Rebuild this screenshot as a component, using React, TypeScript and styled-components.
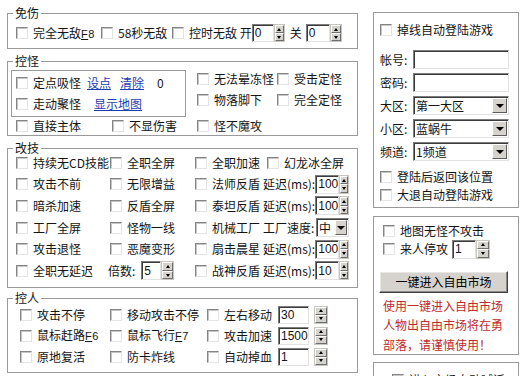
import React from "react";
import styled, { createGlobalStyle } from "styled-components";

const GlobalStyle = createGlobalStyle`
  html, body { margin: 0; padding: 0; background: #fff; }
  body {
    font-family: "Noto Sans CJK SC", "Noto Sans", sans-serif;
    font-size: 12px;
    color: #141414;
  }
  * { box-sizing: border-box; }
`;

const Page = styled.div`
  display: flex;
  align-items: flex-start;
  gap: 15px;
  width: 521px;
  height: 376px;
  overflow: hidden;
  padding-left: 7px;
`;

const LeftCol = styled.div`
  display: flex;
  flex-direction: column;
  width: 351px;
  padding-top: 6px;
`;

const RightCol = styled.div`
  display: flex;
  flex-direction: column;
  width: 146px;
  padding-top: 12px;
`;

const Group = styled.fieldset<{ $h: number; $mt?: number }>`
  margin: ${(p) => p.$mt ?? 0}px 0 0 0;
  height: ${(p) => p.$h}px;
  padding: 0;
  border: 1px solid #9a9a9a;
  box-shadow: inset 1px 1px 0 #fff, 1px 1px 0 #fff;
  min-width: 0;
`;

const Legend = styled.legend`
  margin-left: 5px;
  padding: 0 2px;
  line-height: 14px;
  font-size: 12px;
`;

const Body = styled.div<{ $pl?: number; $pr?: number; $pt?: number }>`
  display: flex;
  flex-direction: column;
  padding: ${(p) => p.$pt ?? 0}px ${(p) => p.$pr ?? 0}px 0 ${(p) => p.$pl ?? 0}px;
`;

const Row = styled.div<{ $h?: number; $mt?: number }>`
  display: flex;
  align-items: center;
  height: ${(p) => p.$h ?? 21}px;
  margin-top: ${(p) => p.$mt ?? 0}px;
  white-space: nowrap;
`;

const Check = styled.label<{ $w?: number }>`
  display: inline-flex;
  align-items: center;
  gap: 5px;
  width: ${(p) => (p.$w ? `${p.$w}px` : "auto")};
  flex-shrink: 0;
  white-space: nowrap;
  line-height: 16px;
`;

const Box = styled.span`
  width: 12px;
  height: 12px;
  flex-shrink: 0;
  background: #fff;
  border: 1px solid;
  border-color: #858585 #e4e4e4 #e4e4e4 #858585;
  box-shadow: inset 1px 1px 0 #c6c6c6;
`;

const Cell = styled.div<{ $w?: number }>`
  display: flex;
  align-items: center;
  width: ${(p) => (p.$w ? `${p.$w}px` : "auto")};
  flex: ${(p) => (p.$w ? "0 0 auto" : "1 1 auto")};
  white-space: nowrap;
`;

const Text = styled.span<{ $ml?: number; $mr?: number }>`
  margin-left: ${(p) => p.$ml ?? 0}px;
  margin-right: ${(p) => p.$mr ?? 0}px;
  line-height: 16px;
`;

const Push = styled.span`
  margin-left: auto;
`;

const Link = styled.span<{ $ml: number }>`
  margin-left: ${(p) => p.$ml}px;
  color: #1f3cb0;
  text-decoration: underline;
  line-height: 16px;
`;

const Hot = styled.span`
  font-family: "Liberation Sans", sans-serif;
  font-size: 11px;
  letter-spacing: 0.5px;
  u { text-decoration: underline; }
`;

const SpinWrap = styled.div<{ $h: number; $gap: number; $ml: number }>`
  display: flex;
  height: ${(p) => p.$h}px;
  gap: ${(p) => p.$gap}px;
  margin-left: ${(p) => p.$ml}px;
  flex-shrink: 0;
`;

const Field = styled.div<{ $w?: number }>`
  width: ${(p) => (p.$w ? `${p.$w}px` : "auto")};
  flex: ${(p) => (p.$w ? "0 0 auto" : "1 1 auto")};
  height: 100%;
  background: #fff;
  border: 1px solid;
  border-color: #7c7c7c #e2e2e2 #e2e2e2 #7c7c7c;
  box-shadow: inset 1px 1px 0 #3c3c3c;
  padding-left: 2px;
  display: flex;
  align-items: center;
  line-height: 14px;
  font-family: "Liberation Sans", "Noto Sans CJK SC", sans-serif;
  font-size: 12px;
  overflow: hidden;
  white-space: nowrap;
`;

const SpinBtns = styled.div<{ $w: number }>`
  display: flex;
  flex-direction: column;
  width: ${(p) => p.$w}px;
  height: 100%;
  border: 1px solid #c9c6c0;
`;

const SpinBtn = styled.div`
  flex: 1;
  display: flex;
  align-items: center;
  justify-content: center;
  background: #d6d3ce;
  border: 1px solid;
  border-color: #fff #6e6e6e #6e6e6e #fff;
`;

const Tri = styled.span<{ $down?: boolean }>`
  width: 0;
  height: 0;
  border-left: 2.5px solid transparent;
  border-right: 2.5px solid transparent;
  ${(p) =>
    p.$down ? "border-top: 3px solid #000;" : "border-bottom: 3px solid #000;"}
`;

const DropBtn = styled.span<{ $w: number }>`
  width: ${(p) => p.$w}px;
  height: calc(100% - 2px);
  margin: 1px 1px 1px auto;
  flex-shrink: 0;
  background: #d6d3ce;
  border: 1px solid;
  border-color: #fff #5e5e5e #5e5e5e #fff;
  display: flex;
  align-items: center;
  justify-content: center;
`;

const ComboField = styled(Field)`
  padding-right: 0;
  font-family: "Noto Sans CJK SC", sans-serif;
`;

const DropTri = styled.span`
  width: 0;
  height: 0;
  border-left: 4px solid transparent;
  border-right: 4px solid transparent;
  border-top: 4px solid #000;
`;

type SpinProps = { value: string; w: number; bw?: number; h?: number; gap?: number; ml?: number };
const Spin = ({ value, w, bw = 11, h = 18, gap = 0, ml = 0 }: SpinProps) => (
  <SpinWrap $h={h} $gap={gap} $ml={ml}>
    <Field $w={w}>{value}</Field>
    <SpinBtns $w={bw}>
      <SpinBtn>
        <Tri />
      </SpinBtn>
      <SpinBtn>
        <Tri $down />
      </SpinBtn>
    </SpinBtns>
  </SpinWrap>
);

type ComboProps = { value: string; w?: number; h?: number; bw?: number; ml?: number };
const Combo = ({ value, w, h = 19, bw = 15, ml = 0 }: ComboProps) => (
  <SpinWrap $h={h} $gap={0} $ml={ml} style={w ? undefined : { flex: 1 }}>
    <ComboField $w={w}>
      <span>{value}</span>
      <DropBtn $w={bw}>
        <DropTri />
      </DropBtn>
    </ComboField>
  </SpinWrap>
);

const CB = ({ children, w }: { children: React.ReactNode; w?: number }) => (
  <Check $w={w}>
    <Box />
    <span>{children}</span>
  </Check>
);

const InnerBox = styled.div`
  width: 175px;
  height: 47px;
  border: 1px solid #9a9a9a;
  box-shadow: inset 1px 1px 0 #fff, 1px 1px 0 #fff;
  padding: 0 0 0 4px;
  display: flex;
  flex-direction: column;
`;

const TopPart = styled.div`
  display: flex;
  align-items: flex-start;
  margin-top: 2px;
`;

const SideGrid = styled.div`
  display: grid;
  grid-template-columns: 80px auto;
  grid-auto-rows: 21px;
  align-items: center;
  margin: -2px 0 0 11px;
`;

const Panel = styled.div<{ $h: number; $mt?: number; $pl?: number }>`
  height: ${(p) => p.$h}px;
  margin-top: ${(p) => p.$mt ?? 0}px;
  border: 1px solid #9a9a9a;
  box-shadow: inset 1px 1px 0 #fff, 1px 1px 0 #fff;
  padding: 0 9px 0 ${(p) => p.$pl ?? 6}px;
  display: flex;
  flex-direction: column;
  overflow: hidden;
`;

const FormRow = styled.div<{ $mt?: number }>`
  display: flex;
  align-items: center;
  height: 19px;
  margin-top: ${(p) => p.$mt ?? 4}px;
`;

const FormLabel = styled.span`
  width: 33px;
  flex-shrink: 0;
  line-height: 16px;
`;

const BigButton = styled.div`
  margin: 12px 0 0 -4px;
  width: 129px;
  height: 22px;
  flex-shrink: 0;
  display: flex;
  align-items: center;
  justify-content: center;
  background: #d6d3ce;
  border: 1px solid;
  border-color: #fff #404040 #404040 #fff;
  box-shadow: inset -1px -1px 0 #8a8a8a, inset 1px 1px 0 #e8e6e2;
  color: #000;
  line-height: 16px;
`;

const Warn = styled.div`
  margin-top: 3px;
  color: #c02a2a;
  line-height: 19.5px;
  white-space: nowrap;
`;

const SkillRow = styled(Row)`
  height: 21.6px;
`;

export default function App() {
  return (
    <>
      <GlobalStyle />
      <Page>
        <LeftCol>
          <Group $h={43}>
            <Legend>免伤</Legend>
            <Body $pl={8}>
              <Row $h={20} $mt={3}>
                <CB w={85}>
                  完全无敌
                  <Hot>
                    <u>F</u>8
                  </Hot>
                </CB>
                <CB w={71}>58秒无敌</CB>
                <CB>控时无敌 开</CB>
                <Spin value="0" w={22} bw={11} h={18} />
                <Text $ml={5} $mr={4}>
                  关
                </Text>
                <Spin value="0" w={24} bw={12} h={18} />
              </Row>
            </Body>
          </Group>

          <Group $h={82} $mt={5}>
            <Legend>控怪</Legend>
            <Body $pl={3}>
              <TopPart>
                <InnerBox>
                  <Row $h={21} $mt={1}>
                    <CB>定点吸怪</CB>
                    <Link $ml={6}>设点</Link>
                    <Link $ml={9}>清除</Link>
                    <Text $ml={13}>0</Text>
                  </Row>
                  <Row $h={21}>
                    <CB>走动聚怪</CB>
                    <Link $ml={13}>显示地图</Link>
                  </Row>
                </InnerBox>
                <SideGrid>
                  <CB>无法晕冻怪</CB>
                  <CB>受击定怪</CB>
                  <CB>物落脚下</CB>
                  <CB>完全定怪</CB>
                </SideGrid>
              </TopPart>
              <Row $h={18} $mt={0}>
                <Cell $w={5} />
                <CB w={96}>直接主体</CB>
                <CB w={85}>不显伤害</CB>
                <CB>怪不魔攻</CB>
              </Row>
            </Body>
          </Group>

          <Group $h={147} $mt={5}>
            <Legend>改技</Legend>
            <Body $pl={8} $pr={8}>
              <SkillRow $mt={-3}>
                <CB w={94}>持续无CD技能</CB>
                <CB w={85}>全职全屏</CB>
                <CB w={72}>全职加速</CB>
                <CB>幻龙冰全屏</CB>
              </SkillRow>
              <SkillRow>
                <CB w={94}>攻击不前</CB>
                <CB w={85}>无限增益</CB>
                <Cell>
                  <CB>法师反盾</CB>
                  <Text $ml={3}>延迟(ms):</Text>
                  <Push />
                  <Spin value="100" w={24} bw={10} h={19} />
                </Cell>
              </SkillRow>
              <SkillRow>
                <CB w={94}>暗杀加速</CB>
                <CB w={85}>反盾全屏</CB>
                <Cell>
                  <CB>泰坦反盾</CB>
                  <Text $ml={3}>延迟(ms):</Text>
                  <Push />
                  <Spin value="100" w={24} bw={10} h={19} />
                </Cell>
              </SkillRow>
              <SkillRow>
                <CB w={94}>工厂全屏</CB>
                <CB w={85}>怪物一线</CB>
                <Cell>
                  <CB>机械工厂</CB>
                  <Text $ml={3}>工厂速度:</Text>
                  <Push />
                  <Combo value="中" w={33} h={19} bw={12} />
                </Cell>
              </SkillRow>
              <SkillRow>
                <CB w={94}>攻击退怪</CB>
                <CB w={85}>恶魔变形</CB>
                <Cell>
                  <CB>扇击晨星</CB>
                  <Text $ml={3}>延迟(ms):</Text>
                  <Push />
                  <Spin value="100" w={24} bw={10} h={19} />
                </Cell>
              </SkillRow>
              <SkillRow>
                <CB w={92}>全职无延迟</CB>
                <Cell $w={87}>
                  <Text $mr={6}>倍数:</Text>
                  <Spin value="5" w={20} bw={13} h={19} />
                </Cell>
                <Cell>
                  <CB>战神反盾</CB>
                  <Text $ml={3}>延迟(ms):</Text>
                  <Push />
                  <Spin value="10" w={24} bw={10} h={19} />
                </Cell>
              </SkillRow>
            </Body>
          </Group>

          <Group $h={82} $mt={3}>
            <Legend>控人</Legend>
            <Body $pl={12}>
              <Row $h={21} $mt={-1}>
                <CB w={90}>攻击不停</CB>
                <CB w={97}>移动攻击不停</CB>
                <CB w={71}>左右移动</CB>
                <Spin value="30" w={31} bw={14} h={18} gap={5} />
              </Row>
              <Row $h={21}>
                <CB w={90}>
                  鼠标赶路
                  <Hot>
                    <u>F</u>6
                  </Hot>
                </CB>
                <CB w={97}>
                  鼠标飞行
                  <Hot>
                    <u>F</u>7
                  </Hot>
                </CB>
                <CB w={71}>攻击加速</CB>
                <Spin value="1500" w={31} bw={14} h={18} gap={5} />
              </Row>
              <Row $h={21}>
                <CB w={90}>原地复活</CB>
                <CB w={97}>防卡炸线</CB>
                <CB w={71}>自动掉血</CB>
                <Spin value="1" w={31} bw={14} h={18} gap={5} />
              </Row>
            </Body>
          </Group>
        </LeftCol>

        <RightCol>
          <Panel $h={196}>
            <Row $h={18} $mt={8}>
              <CB>掉线自动登陆游戏</CB>
            </Row>
            <FormRow $mt={11}>
              <FormLabel>帐号:</FormLabel>
              <Field />
            </FormRow>
            <FormRow>
              <FormLabel>密码:</FormLabel>
              <Field />
            </FormRow>
            <FormRow>
              <FormLabel>大区:</FormLabel>
              <Combo value="第一大区" />
            </FormRow>
            <FormRow>
              <FormLabel>小区:</FormLabel>
              <Combo value="蓝蜗牛" />
            </FormRow>
            <FormRow>
              <FormLabel>频道:</FormLabel>
              <Combo value="1频道" />
            </FormRow>
            <Row $h={18} $mt={7}>
              <CB>登陆后返回该位置</CB>
            </Row>
            <Row $h={18}>
              <CB>大退自动登陆游戏</CB>
            </Row>
          </Panel>

          <Panel $h={139} $mt={8} $pl={9}>
            <Row $h={18} $mt={6}>
              <CB>地图无怪不攻击</CB>
            </Row>
            <Row $h={20}>
              <CB>来人停攻</CB>
              <Spin value="1" w={24} bw={14} h={19} ml={4} />
            </Row>
            <BigButton>一键进入自由市场</BigButton>
            <Warn>
              使用一键进入自由市场
              <br />
              人物出自由市场将在勇
              <br />
              部落，请谨慎使用！
            </Warn>
          </Panel>

          <Panel $h={40} $mt={7} $pl={18}>
            <Row $h={18} $mt={8}>
              <CB>进入市场自动喊话</CB>
            </Row>
          </Panel>
        </RightCol>
      </Page>
    </>
  );
}
